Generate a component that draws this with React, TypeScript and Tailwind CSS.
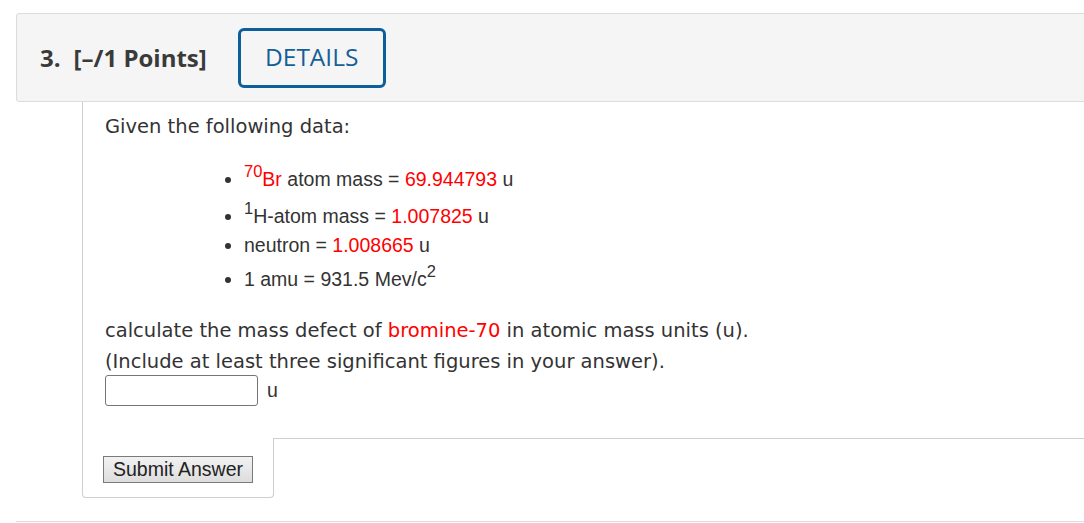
import React from "react";

export default function App() {
  const verd = { fontFamily: '"DejaVu Sans", Verdana, sans-serif' };
  const arial = { fontFamily: '"Liberation Sans", Arial, sans-serif' };
  return (
    <div className="w-[1084px] h-[523px] overflow-hidden bg-white">
      <div className="pt-[13px] pl-[16px]">
        {/* header */}
        <div
          className="h-[89px] mr-[-10px] bg-[#f5f5f5] border border-[#dcdcdc] rounded-[3px] flex items-center pl-[23px]"
          style={{ fontFamily: '"Open Sans", sans-serif' }}
        >
          <span className="text-[24px] font-bold text-[#3a3a3a]">3.</span>
          <span className="ml-[13px] text-[24px] font-bold text-[#3a3a3a]">[–/1 Points]</span>
          <div className="ml-[31px] w-[148px] h-[60px] border-[3px] border-[#0d5f99] rounded-[6px] flex items-center justify-center text-[24.5px] text-[#155f98]">
            DETAILS
          </div>
        </div>

        {/* content */}
        <div className="ml-[66px]">
          <div className="border-l border-[#cfcfcf] pl-[22px] pt-[12px] pb-[32px] text-[#333]">
            <p className="text-[19.5px] leading-[26px]" style={verd}>
              Given the following data:
            </p>
            <ul
              className="list-disc ml-[139px] mt-[25px] text-[19.5px] leading-[29px] text-[#333]"
              style={arial}
            >
              <li>
                <span className="text-[#ff0000]">
                  <sup className="text-[16.5px] align-baseline relative top-[-9px]">70</sup>Br
                </span>{" "}
                atom mass = <span className="text-[#ff0000]">69.944793</span> u
              </li>
              <li className="mt-[8px]">
                <sup className="text-[16.5px] align-baseline relative top-[-9px]">1</sup>H-atom mass ={" "}
                <span className="text-[#ff0000]">1.007825</span> u
              </li>
              <li>
                neutron = <span className="text-[#ff0000]">1.008665</span> u
              </li>
              <li className="mt-[5px]">
                1 amu = 931.5 Mev/c
                <sup className="text-[16.5px] align-baseline relative top-[-9px]">2</sup>
              </li>
            </ul>
            <p className="mt-[21px] text-[19.5px] leading-[31px]" style={verd}>
              calculate the mass defect of <span className="text-[#ff0000]">bromine-70</span> in atomic mass units (u).
              <br />
              (Include at least three significant figures in your answer).
            </p>
            <div className="flex items-center -mt-[2px]">
              <div className="w-[153px] h-[31px] border border-[#767676] rounded-[3px] bg-white" />
              <span className="ml-[9px] text-[19.5px] text-[#333]" style={arial}>
                u
              </span>
            </div>
          </div>
          <div className="flex">
            <div className="w-[192px] h-[60px] border-l border-r border-b border-[#cfcfcf] rounded-b-[4px] pl-[20px] pt-[18px]">
              <div
                className="w-[150px] h-[27px] border border-[#7a7a7a] bg-gradient-to-b from-[#f2f2f2] to-[#dddddd] flex items-center justify-center text-[19.5px] text-[#222]"
                style={arial}
              >
                Submit Answer
              </div>
            </div>
            <div className="flex-1 border-t border-[#cfcfcf]" />
          </div>
        </div>
        <div className="mt-[23px] h-px bg-[#dcdcdc]" />
      </div>
    </div>
  );
}
